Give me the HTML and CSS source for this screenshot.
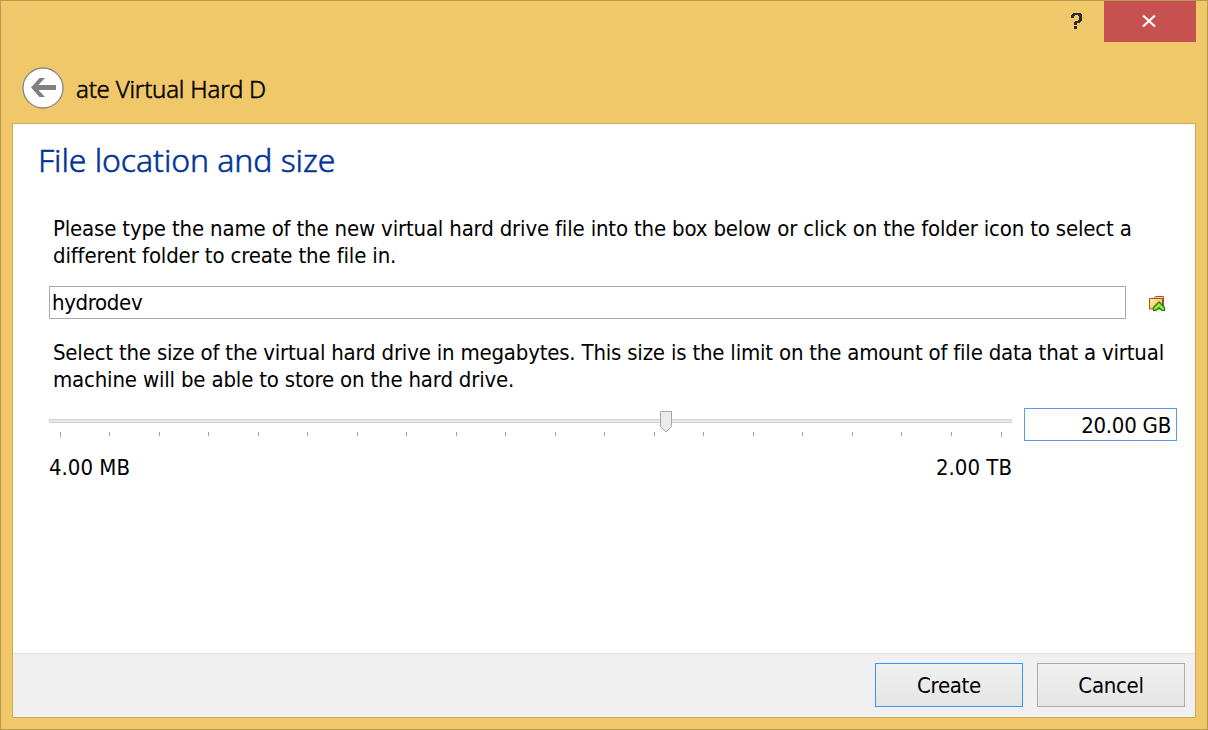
FILE: index.html
```html
<!DOCTYPE html>
<html lang="en">
<head>
<meta charset="utf-8">
<title>Create Virtual Hard Drive</title>
<link rel="stylesheet" href="styles.css">
</head>
<body>
<div class="window">
  <div class="controls">
    <svg class="help" width="11" height="16" viewBox="0 0 11 16" shape-rendering="crispEdges"><path fill="#2a2a2a" d="M2 0h8v1h1v7h-1v1H9v1H6v2H3V9h1V8h3V7h1V3H7V2H4v1H3v2H0V2h1V1h1zM3 13h3v3H3z"/></svg>
    <div class="close"><svg width="14" height="12" viewBox="0 0 14 12"><path d="M1 .5 13 11.5M13 .5 1 11.5" stroke="#fff" stroke-width="2.2" fill="none"/></svg></div>
  </div>
  <header class="header">
    <svg class="back" width="42" height="42" viewBox="0 0 42 42"><circle cx="21" cy="21" r="20" fill="#fff" stroke="#858585" stroke-width="1.3"/><path fill="#808080" d="M9 20.500 17.500 11H23l-6.500 7H34v5H16.500l6.500 7h-5.500z"/></svg>
    <div class="title">ate Virtual Hard D</div>
  </header>
  <main class="panel">
    <div class="content">
      <h1 class="heading">File location and size</h1>
      <div class="para"><span class="p1">Please type the name of the new virtual hard drive file into the box below or click on the folder icon to select a</span><br><span class="p2">different folder to create the file in.</span></div>
      <div class="filerow">
        <div class="field"><span class="name">hydrodev</span></div>
        <svg class="folder" width="17" height="16" viewBox="0 0 17 16">
          <defs><linearGradient id="fill" x1="0" y1="0" x2="1" y2="1"><stop offset="0" stop-color="#fff3c0"/><stop offset="1" stop-color="#fbb030"/></linearGradient></defs>
          <path d="M5.500 2.500V1.500l1-1h8v12" fill="#ffe08c" stroke="#a5541c"/>
          <path d="M.5 2.500h13v10.500H.5z" fill="url(#fill)" stroke="#a94e16"/>
          <path d="M10 6 15.500 11.500v2.800H13l-3-2.600-3 2.600H4.500v-2.800z" fill="#94e84c" stroke="#1f7a0c" stroke-width="1.200" stroke-linejoin="round"/>
        </svg>
      </div>
      <div class="para second"><span class="p3">Select the size of the virtual hard drive in megabytes. This size is the limit on the amount of file data that a virtual</span><br><span class="p4">machine will be able to store on the hard drive.</span></div>
      <div class="sizerow">
        <div class="slider">
          <svg width="963" height="28" viewBox="0 0 963 28">
            <path d="M.5 11.500h962v3H.5z" fill="#e7eaea" stroke="#d3d3d3"/>
            <path d="M11.500 24v5M60.500 24v4M110.500 24v4M159.500 24v4M209.500 24v4M258.500 24v4M308.500 24v4M357.500 24v4M407.500 24v4M456.500 24v4M506.500 24v4M555.500 24v4M605.500 24v4M654.500 24v4M704.500 24v4M753.500 24v4M803.500 24v4M852.500 24v4M902.500 24v4M952.500 24v5" stroke="#a5a193" fill="none"/>
            <path d="M611.500 3.500h11v15l-5.500 5.500-5.500-5.500z" fill="#ececec" stroke="#a8a8a8"/>
          </svg>
          <div class="limits"><span class="min">4.00 MB</span><span class="max">2.00 TB</span></div>
        </div>
        <div class="field size"><span class="value">20.00 GB</span></div>
      </div>
    </div>
    <footer class="footer">
      <button class="btn primary"><span class="create">Create</span></button>
      <button class="btn"><span class="cancel">Cancel</span></button>
    </footer>
  </main>
</div>
</body>
</html>
```
FILE: styles.css
```css
* { box-sizing: border-box; }
body { margin: 0; overflow: hidden; font-family: "DejaVu Sans Condensed", "DejaVu Sans", sans-serif; font-size: 22px; font-stretch: condensed; color: #000; }
svg { display: block; overflow: visible; flex: none; }
span { white-space: nowrap; }
.window { width: 1208px; height: 730px; background: #f0c869; border: 1px solid #b89a50; padding: 0 11px 11px; display: flex; flex-direction: column; }
.controls { height: 41px; display: flex; justify-content: flex-end; }
.help { margin: 12px 22px 0 0; }
.close { width: 92px; height: 41px; background: #c75050; display: flex; justify-content: center; padding: 14px 2px 0 0; }
.header { height: 81px; display: flex; padding: 25px 0 0 10px; }
.title { font: 300 24px/32px "Noto Sans", sans-serif; letter-spacing: -.2px; -webkit-text-stroke: .5px #000; margin: 6px 0 0 12px; white-space: nowrap; }
.panel { flex: 1; background: #fff; border: 1px solid #cbaa5b; display: flex; flex-direction: column; }
.content { flex: 1; padding: 16px 18px 0 36px; }
.heading { margin: 0 0 0 -11px; font: 300 32px/40px "Noto Sans", sans-serif; letter-spacing: -.08px; -webkit-text-stroke: .5px #003399; color: #003399; white-space: nowrap; }
.para { height: 54px; margin: 35px 0 0 4px; line-height: 27px; }
.p1 { letter-spacing: -.17px; }
.p2 { letter-spacing: -.15px; }
.p3 { letter-spacing: -.2px; }
.p4 { letter-spacing: -.18px; }
.name { letter-spacing: -.35px; }
.value { letter-spacing: -.25px; }
.create, .cancel { letter-spacing: -.3px; }
.filerow { display: flex; align-items: center; margin-top: 17px; }
.field { width: 1077px; height: 33px; border: 1px solid #ababab; line-height: 31px; padding-left: 2px; }
.folder { margin: 3px 0 0 23px; }
.second { margin-top: 20px; }
.sizerow { display: flex; gap: 12px; margin-top: 15px; }
.slider { width: 963px; }
.limits { display: flex; justify-content: space-between; line-height: 30px; margin-top: 17px; }
.size { width: 153px; border-color: #569de5; text-align: right; padding: 1px 5px 0 0; }
.footer { height: 64px; background: #f0f0f0; border-top: 1px solid #dfdfdf; display: flex; justify-content: flex-end; gap: 14px; padding: 9px 10px 0 0; }
.btn { width: 148px; height: 44px; border: 1px solid #acacac; background: linear-gradient(#f0f0f0, #e5e5e5); font: inherit; color: #000; padding: 0; }
.primary { border-color: #3399ff; }
```
